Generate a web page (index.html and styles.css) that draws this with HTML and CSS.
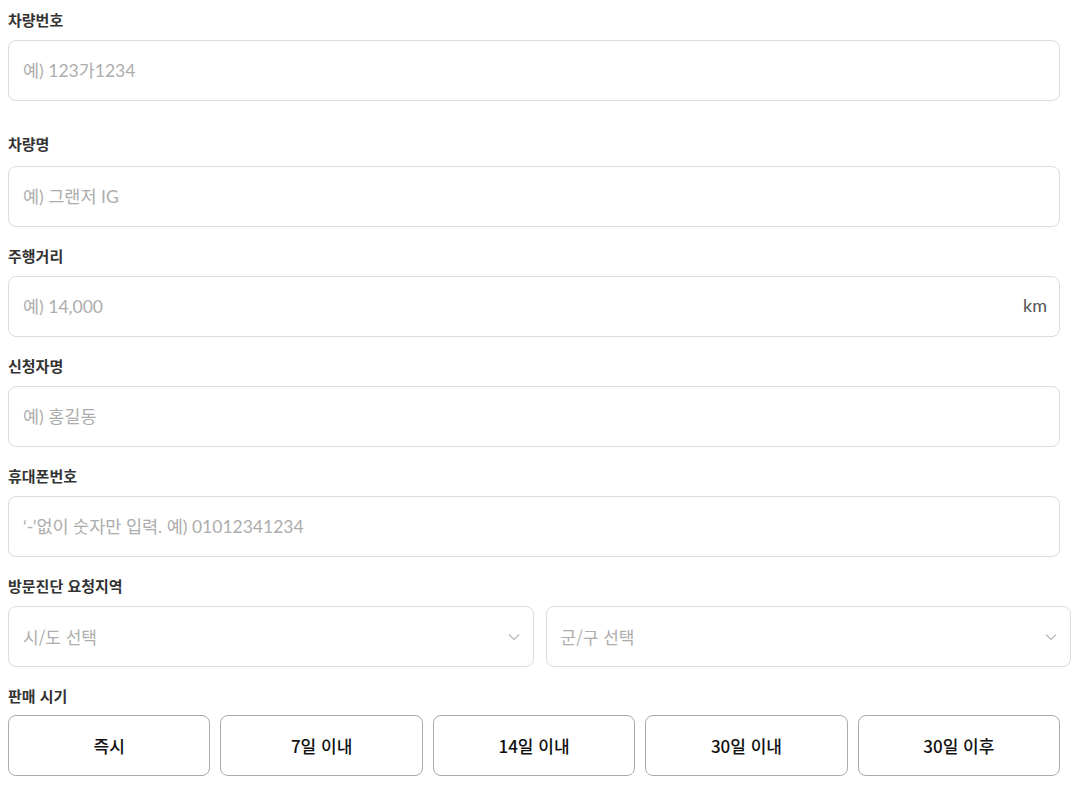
FILE: index.html
```html
<!DOCTYPE html>
<html lang="ko">
<head>
  <meta charset="UTF-8" />
  <meta name="viewport" content="width=device-width, initial-scale=1.0"/>
  <title>내차팔기 - 방문진단 신청</title>
  <link rel="stylesheet" href="styles.css">
</head>
<body>
  <form class="sell-form">
    <div class="field first">
      <label for="carNo">차량번호</label>
      <input type="text" id="carNo" placeholder="예) 123가1234">
    </div>

    <div class="field second">
      <label for="carName">차량명</label>
      <input type="text" id="carName" placeholder="예) 그랜저 IG">
    </div>

    <div class="field">
      <label for="mileage">주행거리</label>
      <div class="with-unit">
        <input type="text" id="mileage" placeholder="예) 14,000">
        <span class="unit">km</span>
      </div>
    </div>

    <div class="field">
      <label for="name">신청자명</label>
      <input type="text" id="name" placeholder="예) 홍길동">
    </div>

    <div class="field">
      <label for="phone">휴대폰번호</label>
      <input type="text" id="phone" placeholder="‘-’없이 숫자만 입력. 예) 01012341234">
    </div>

    <div class="field">
      <label>방문진단 요청지역</label>
      <div class="region">
        <div class="select-box">
          <span>시/도 선택</span>
          <svg width="12" height="8" viewBox="0 0 12 8"><path d="M1 1.5l5 5 5-5" fill="none" stroke="#b5b5b5" stroke-width="1.1"/></svg>
        </div>
        <div class="select-box">
          <span>군/구 선택</span>
          <svg width="12" height="8" viewBox="0 0 12 8"><path d="M1 1.5l5 5 5-5" fill="none" stroke="#b5b5b5" stroke-width="1.1"/></svg>
        </div>
      </div>
    </div>

    <div class="field timing-field">
      <label>판매 시기</label>
      <div class="timing">
        <button type="button">즉시</button>
        <button type="button">7일 이내</button>
        <button type="button">14일 이내</button>
        <button type="button">30일 이내</button>
        <button type="button">30일 이후</button>
      </div>
    </div>
  </form>
</body>
</html>
```

FILE: styles.css
```css
* {
  margin: 0;
  padding: 0;
  box-sizing: border-box;
}

body {
  font-family: Lato, "Noto Sans CJK KR", sans-serif;
  background: #fff;
  color: #222;
}

.sell-form {
  padding: 0 12px 0 8px;
}

.field {
  margin-top: 18px;
}

.field.first {
  margin-top: 9px;
}

.field.second {
  margin-top: 32px;
}

.field.second label {
  margin-bottom: 11px;
}

.field label {
  display: block;
  font-family: "Noto Sans CJK KR", sans-serif;
  font-size: 15px;
  font-weight: 700;
  line-height: 22px;
  color: #333;
  margin-bottom: 9px;
}

.timing-field label {
  margin-bottom: 8px;
}

input {
  display: block;
  width: 100%;
  height: 61px;
  padding: 0 14px;
  border: 1px solid #dcdcdc;
  border-radius: 8px;
  font-family: Lato, "Noto Sans CJK KR", sans-serif;
  font-size: 17.5px;
  color: #222;
  outline: none;
}

input::placeholder {
  color: #adadad;
}

.with-unit {
  position: relative;
}

.with-unit .unit {
  position: absolute;
  right: 13px;
  top: 18px;
  font-size: 18px;
  color: #555;
}

.region {
  display: flex;
  gap: 12px;
  margin-right: -11px;
}

.select-box {
  flex: 1;
  height: 61px;
  padding: 0 13px 0 14px;
  border: 1px solid #dcdcdc;
  border-radius: 8px;
  display: flex;
  align-items: center;
  justify-content: space-between;
  font-family: "Noto Sans CJK KR", sans-serif;
  font-size: 17px;
  color: #adadad;
}

.timing {
  display: flex;
  gap: 10px;
}

.timing button {
  flex: 1;
  height: 61px;
  background: #fff;
  border: 1px solid #a9a9a9;
  border-radius: 8px;
  font-family: "Noto Sans CJK KR", sans-serif;
  font-size: 17px;
  font-weight: 500;
  color: #111;
  cursor: pointer;
}
```
